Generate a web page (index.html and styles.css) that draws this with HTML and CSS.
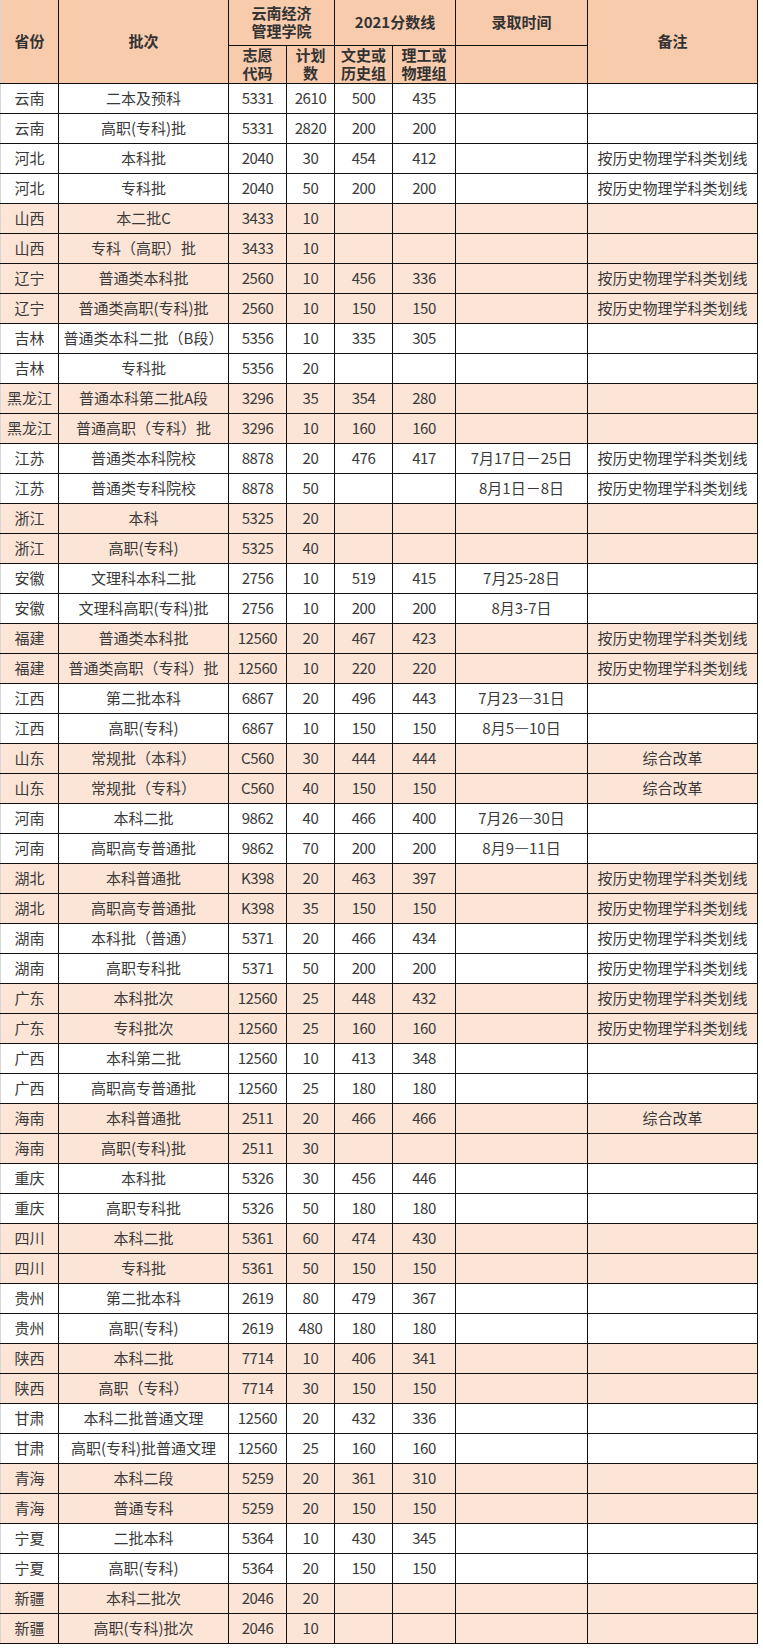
FILE: index.html
```html
<!DOCTYPE html>
<html lang="zh-CN">
<head>
<meta charset="utf-8">
<title>2021分数线</title>
<link rel="stylesheet" href="styles.css">
</head>
<body>
<table class="score">
  <colgroup>
    <col class="c-prov"><col class="c-batch"><col class="c-code"><col class="c-plan">
    <col class="c-wen"><col class="c-li"><col class="c-time"><col class="c-note">
  </colgroup>
  <thead>
    <tr class="h1">
      <th rowspan="2" class="first">省份</th>
      <th rowspan="2">批次</th>
      <th colspan="2">云南经济<br>管理学院</th>
      <th colspan="2">2021分数线</th>
      <th>录取时间</th>
      <th rowspan="2">备注</th>
    </tr>
    <tr class="h2">
      <th>志愿<br>代码</th>
      <th>计划<br>数</th>
      <th>文史或<br>历史组</th>
      <th>理工或<br>物理组</th>
      <th></th>
    </tr>
  </thead>
  <tbody>
    <tr><td class="first">云南</td><td>二本及预科</td><td class="n">5331</td><td class="n">2610</td><td class="n">500</td><td class="n">435</td><td></td><td></td></tr>
    <tr><td class="first">云南</td><td>高职(专科)批</td><td class="n">5331</td><td class="n">2820</td><td class="n">200</td><td class="n">200</td><td></td><td></td></tr>
    <tr><td class="first">河北</td><td>本科批</td><td class="n">2040</td><td class="n">30</td><td class="n">454</td><td class="n">412</td><td></td><td>按历史物理学科类划线</td></tr>
    <tr><td class="first">河北</td><td>专科批</td><td class="n">2040</td><td class="n">50</td><td class="n">200</td><td class="n">200</td><td></td><td>按历史物理学科类划线</td></tr>
    <tr class="alt"><td class="first">山西</td><td>本二批C</td><td class="n">3433</td><td class="n">10</td><td></td><td></td><td></td><td></td></tr>
    <tr class="alt"><td class="first">山西</td><td>专科（高职）批</td><td class="n">3433</td><td class="n">10</td><td></td><td></td><td></td><td></td></tr>
    <tr class="alt"><td class="first">辽宁</td><td>普通类本科批</td><td class="n">2560</td><td class="n">10</td><td class="n">456</td><td class="n">336</td><td></td><td>按历史物理学科类划线</td></tr>
    <tr class="alt"><td class="first">辽宁</td><td>普通类高职(专科)批</td><td class="n">2560</td><td class="n">10</td><td class="n">150</td><td class="n">150</td><td></td><td>按历史物理学科类划线</td></tr>
    <tr><td class="first">吉林</td><td>普通类本科二批（B段）</td><td class="n">5356</td><td class="n">10</td><td class="n">335</td><td class="n">305</td><td></td><td></td></tr>
    <tr><td class="first">吉林</td><td>专科批</td><td class="n">5356</td><td class="n">20</td><td></td><td></td><td></td><td></td></tr>
    <tr class="alt"><td class="first">黑龙江</td><td>普通本科第二批A段</td><td class="n">3296</td><td class="n">35</td><td class="n">354</td><td class="n">280</td><td></td><td></td></tr>
    <tr class="alt"><td class="first">黑龙江</td><td>普通高职（专科）批</td><td class="n">3296</td><td class="n">10</td><td class="n">160</td><td class="n">160</td><td></td><td></td></tr>
    <tr><td class="first">江苏</td><td>普通类本科院校</td><td class="n">8878</td><td class="n">20</td><td class="n">476</td><td class="n">417</td><td>7月17日－25日</td><td>按历史物理学科类划线</td></tr>
    <tr><td class="first">江苏</td><td>普通类专科院校</td><td class="n">8878</td><td class="n">50</td><td></td><td></td><td>8月1日－8日</td><td>按历史物理学科类划线</td></tr>
    <tr class="alt"><td class="first">浙江</td><td>本科</td><td class="n">5325</td><td class="n">20</td><td></td><td></td><td></td><td></td></tr>
    <tr class="alt"><td class="first">浙江</td><td>高职(专科)</td><td class="n">5325</td><td class="n">40</td><td></td><td></td><td></td><td></td></tr>
    <tr><td class="first">安徽</td><td>文理科本科二批</td><td class="n">2756</td><td class="n">10</td><td class="n">519</td><td class="n">415</td><td>7月25-28日</td><td></td></tr>
    <tr><td class="first">安徽</td><td>文理科高职(专科)批</td><td class="n">2756</td><td class="n">10</td><td class="n">200</td><td class="n">200</td><td>8月3-7日</td><td></td></tr>
    <tr class="alt"><td class="first">福建</td><td>普通类本科批</td><td class="n">12560</td><td class="n">20</td><td class="n">467</td><td class="n">423</td><td></td><td>按历史物理学科类划线</td></tr>
    <tr class="alt"><td class="first">福建</td><td>普通类高职（专科）批</td><td class="n">12560</td><td class="n">10</td><td class="n">220</td><td class="n">220</td><td></td><td>按历史物理学科类划线</td></tr>
    <tr><td class="first">江西</td><td>第二批本科</td><td class="n">6867</td><td class="n">20</td><td class="n">496</td><td class="n">443</td><td>7月23—31日</td><td></td></tr>
    <tr><td class="first">江西</td><td>高职(专科)</td><td class="n">6867</td><td class="n">10</td><td class="n">150</td><td class="n">150</td><td>8月5—10日</td><td></td></tr>
    <tr class="alt"><td class="first">山东</td><td>常规批（本科）</td><td class="n">C560</td><td class="n">30</td><td class="n">444</td><td class="n">444</td><td></td><td>综合改革</td></tr>
    <tr class="alt"><td class="first">山东</td><td>常规批（专科）</td><td class="n">C560</td><td class="n">40</td><td class="n">150</td><td class="n">150</td><td></td><td>综合改革</td></tr>
    <tr><td class="first">河南</td><td>本科二批</td><td class="n">9862</td><td class="n">40</td><td class="n">466</td><td class="n">400</td><td>7月26—30日</td><td></td></tr>
    <tr><td class="first">河南</td><td>高职高专普通批</td><td class="n">9862</td><td class="n">70</td><td class="n">200</td><td class="n">200</td><td>8月9—11日</td><td></td></tr>
    <tr class="alt"><td class="first">湖北</td><td>本科普通批</td><td class="n">K398</td><td class="n">20</td><td class="n">463</td><td class="n">397</td><td></td><td>按历史物理学科类划线</td></tr>
    <tr class="alt"><td class="first">湖北</td><td>高职高专普通批</td><td class="n">K398</td><td class="n">35</td><td class="n">150</td><td class="n">150</td><td></td><td>按历史物理学科类划线</td></tr>
    <tr><td class="first">湖南</td><td>本科批（普通）</td><td class="n">5371</td><td class="n">20</td><td class="n">466</td><td class="n">434</td><td></td><td>按历史物理学科类划线</td></tr>
    <tr><td class="first">湖南</td><td>高职专科批</td><td class="n">5371</td><td class="n">50</td><td class="n">200</td><td class="n">200</td><td></td><td>按历史物理学科类划线</td></tr>
    <tr class="alt"><td class="first">广东</td><td>本科批次</td><td class="n">12560</td><td class="n">25</td><td class="n">448</td><td class="n">432</td><td></td><td>按历史物理学科类划线</td></tr>
    <tr class="alt"><td class="first">广东</td><td>专科批次</td><td class="n">12560</td><td class="n">25</td><td class="n">160</td><td class="n">160</td><td></td><td>按历史物理学科类划线</td></tr>
    <tr><td class="first">广西</td><td>本科第二批</td><td class="n">12560</td><td class="n">10</td><td class="n">413</td><td class="n">348</td><td></td><td></td></tr>
    <tr><td class="first">广西</td><td>高职高专普通批</td><td class="n">12560</td><td class="n">25</td><td class="n">180</td><td class="n">180</td><td></td><td></td></tr>
    <tr class="alt"><td class="first">海南</td><td>本科普通批</td><td class="n">2511</td><td class="n">20</td><td class="n">466</td><td class="n">466</td><td></td><td>综合改革</td></tr>
    <tr class="alt"><td class="first">海南</td><td>高职(专科)批</td><td class="n">2511</td><td class="n">30</td><td></td><td></td><td></td><td></td></tr>
    <tr><td class="first">重庆</td><td>本科批</td><td class="n">5326</td><td class="n">30</td><td class="n">456</td><td class="n">446</td><td></td><td></td></tr>
    <tr><td class="first">重庆</td><td>高职专科批</td><td class="n">5326</td><td class="n">50</td><td class="n">180</td><td class="n">180</td><td></td><td></td></tr>
    <tr class="alt"><td class="first">四川</td><td>本科二批</td><td class="n">5361</td><td class="n">60</td><td class="n">474</td><td class="n">430</td><td></td><td></td></tr>
    <tr class="alt"><td class="first">四川</td><td>专科批</td><td class="n">5361</td><td class="n">50</td><td class="n">150</td><td class="n">150</td><td></td><td></td></tr>
    <tr><td class="first">贵州</td><td>第二批本科</td><td class="n">2619</td><td class="n">80</td><td class="n">479</td><td class="n">367</td><td></td><td></td></tr>
    <tr><td class="first">贵州</td><td>高职(专科)</td><td class="n">2619</td><td class="n">480</td><td class="n">180</td><td class="n">180</td><td></td><td></td></tr>
    <tr class="alt"><td class="first">陕西</td><td>本科二批</td><td class="n">7714</td><td class="n">10</td><td class="n">406</td><td class="n">341</td><td></td><td></td></tr>
    <tr class="alt"><td class="first">陕西</td><td>高职（专科）</td><td class="n">7714</td><td class="n">30</td><td class="n">150</td><td class="n">150</td><td></td><td></td></tr>
    <tr><td class="first">甘肃</td><td>本科二批普通文理</td><td class="n">12560</td><td class="n">20</td><td class="n">432</td><td class="n">336</td><td></td><td></td></tr>
    <tr><td class="first">甘肃</td><td>高职(专科)批普通文理</td><td class="n">12560</td><td class="n">25</td><td class="n">160</td><td class="n">160</td><td></td><td></td></tr>
    <tr class="alt"><td class="first">青海</td><td>本科二段</td><td class="n">5259</td><td class="n">20</td><td class="n">361</td><td class="n">310</td><td></td><td></td></tr>
    <tr class="alt"><td class="first">青海</td><td>普通专科</td><td class="n">5259</td><td class="n">20</td><td class="n">150</td><td class="n">150</td><td></td><td></td></tr>
    <tr><td class="first">宁夏</td><td>二批本科</td><td class="n">5364</td><td class="n">10</td><td class="n">430</td><td class="n">345</td><td></td><td></td></tr>
    <tr><td class="first">宁夏</td><td>高职(专科)</td><td class="n">5364</td><td class="n">20</td><td class="n">150</td><td class="n">150</td><td></td><td></td></tr>
    <tr class="alt"><td class="first">新疆</td><td>本科二批次</td><td class="n">2046</td><td class="n">20</td><td></td><td></td><td></td><td></td></tr>
    <tr class="alt"><td class="first">新疆</td><td>高职(专科)批次</td><td class="n">2046</td><td class="n">10</td><td></td><td></td><td></td><td></td></tr>
  </tbody>
</table>
</body>
</html>
```

FILE: styles.css
```css
html, body {
  margin: 0;
  padding: 0;
  background: #ffffff;
}

.score {
  border-collapse: collapse;
  table-layout: fixed;
  width: 758px;
  font-family: "Noto Sans CJK SC", "Noto Sans", sans-serif;
  font-size: 15px;
  color: #3a3a3a;
}

.c-prov { width: 58px; }
.c-batch { width: 170px; }
.c-code { width: 58px; }
.c-plan { width: 48px; }
.c-wen { width: 58px; }
.c-li { width: 63px; }
.c-time { width: 132px; }
.c-note { width: 170px; }

.score th,
.score td {
  border: 1px solid #111111;
  padding: 0;
  text-align: center;
  vertical-align: middle;
  white-space: nowrap;
  overflow: hidden;
}

.score thead th {
  background: #f8cbad;
  font-weight: 700;
  color: #333333;
  line-height: 18px;
  border-top: none;
}

.score .first {
  border-left: 1px solid #d6d6d6;
}

.score .h1 { height: 45px; }
.score .h2 { height: 38px; }

.score tbody tr {
  height: 30px;
  line-height: 20px;
}

.score tbody tr.alt td {
  background: #fce4d6;
}

.score td.n {
  letter-spacing: -0.4px;
}
```
